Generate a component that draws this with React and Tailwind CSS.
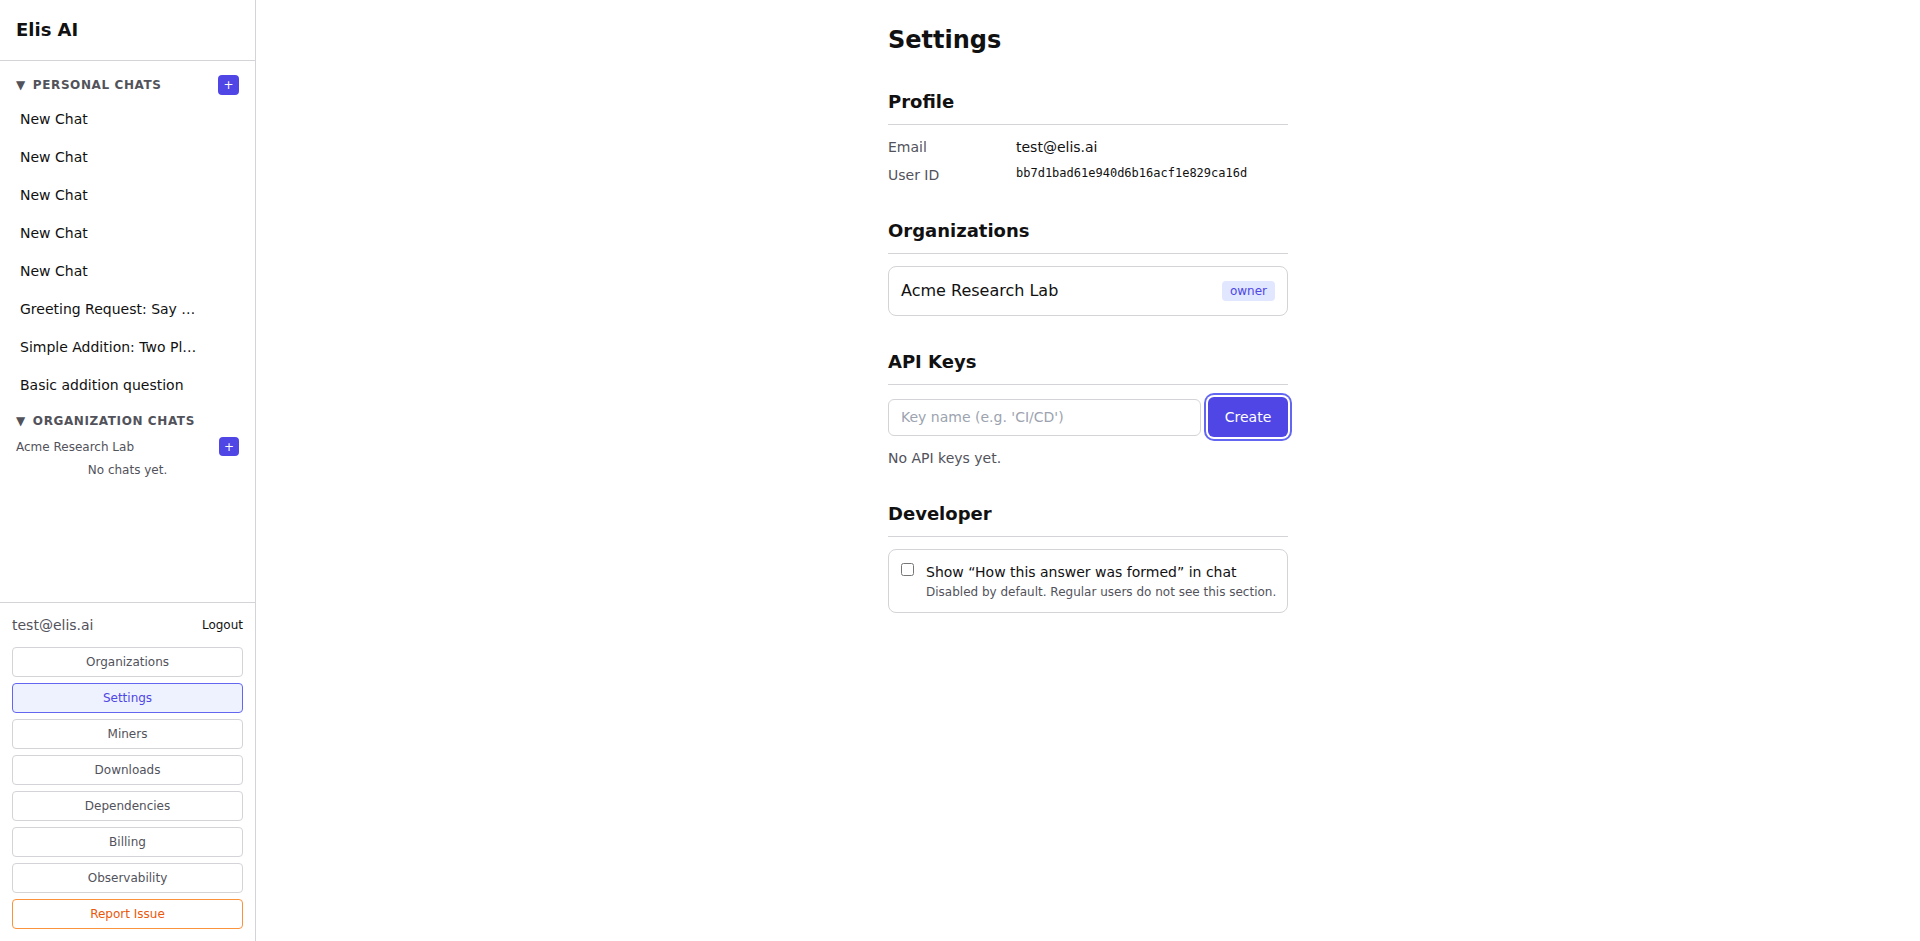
import { useState } from 'react';

const personalChats = [
  'New Chat',
  'New Chat',
  'New Chat',
  'New Chat',
  'New Chat',
  'Greeting Request: Say hello to the world',
  'Simple Addition: Two Plus Two',
  'Basic addition question',
];

const navItems = ['Organizations', 'Settings', 'Miners', 'Downloads', 'Dependencies', 'Billing', 'Observability'];

function PlusButton({ small }) {
  return (
    <button
      className={`flex items-center justify-center rounded bg-[#4f46e5] text-white text-xs leading-none ${small ? 'w-[20px] h-[19px]' : 'w-[21px] h-[20px]'}`}
    >
      +
    </button>
  );
}

function Sidebar() {
  return (
    <aside className="w-64 h-screen shrink-0 flex flex-col border-r border-[#d4d4d8] bg-white">
      {/* Brand */}
      <div className="h-[61px] px-4 flex items-center border-b border-[#d4d4d8]">
        <h1 className="text-lg font-bold text-[#111]">Elis AI</h1>
      </div>

      {/* Chats */}
      <div className="flex-1 overflow-y-auto px-4 pt-[14px]">
        <div className="flex items-center justify-between h-5">
          <div className="flex items-center gap-[7px] text-xs font-bold uppercase tracking-wider text-[#52525b]">
            <span className="text-xs">▼</span>
            <span>Personal Chats</span>
          </div>
          <PlusButton />
        </div>
        <ul className="mt-[5px]">
          {personalChats.map((c, i) => (
            <li key={i} className="h-[38px] flex items-center px-1 text-sm text-[#111]">
              <span className="truncate max-w-[178px]">{c}</span>
            </li>
          ))}
        </ul>
        <div className="mt-[9px] flex items-center gap-[7px] text-xs font-bold uppercase tracking-wider text-[#52525b] h-4">
          <span className="text-xs">▼</span>
          <span>Organization Chats</span>
        </div>
        <div className="mt-[8px] flex items-center justify-between">
          <span className="text-xs text-[#52525b]">Acme Research Lab</span>
          <PlusButton small />
        </div>
        <p className="mt-[6px] text-xs text-[#52525b] text-center">No chats yet.</p>
      </div>

      {/* Account */}
      <div className="border-t border-[#d4d4d8] p-3">
        <div className="flex items-center justify-between mb-3">
          <span className="text-sm text-[#52525b]">test@elis.ai</span>
          <button className="text-xs text-[#111]">Logout</button>
        </div>
        <div className="flex flex-col gap-1.5">
          {navItems.map((n) => (
            <button
              key={n}
              className={`w-full py-1.5 text-xs leading-4 rounded border ${
                n === 'Settings'
                  ? 'bg-[#eef2ff] border-[#6366f1] text-[#4f46e5]'
                  : 'bg-white border-[#d4d4d8] text-[#52525b]'
              }`}
            >
              {n}
            </button>
          ))}
          <button className="w-full py-1.5 text-xs leading-4 rounded border border-[#fb923c] text-[#ea580c] bg-white">
            Report Issue
          </button>
        </div>
      </div>
    </aside>
  );
}

function SectionTitle({ children }) {
  return <h2 className="text-lg font-bold text-[#111] pb-2 border-b border-[#d4d4d8]">{children}</h2>;
}

export default function App() {
  const [showFormed, setShowFormed] = useState(false);
  const [keyName, setKeyName] = useState('');

  return (
    <div className="flex h-screen bg-white font-['DejaVu_Sans',sans-serif] text-[#111]">
      <Sidebar />
      <main className="flex-1 overflow-y-auto">
        <div className="max-w-md mx-auto px-6 pt-6 pb-10">
          <h1 className="text-2xl font-bold leading-8 mb-8">Settings</h1>

          {/* Profile */}
          <section className="mb-8">
            <SectionTitle>Profile</SectionTitle>
            <div className="mt-3 flex flex-col gap-2 text-sm">
              <div className="flex items-center h-5">
                <span className="w-32 text-[#52525b]">Email</span>
                <span>test@elis.ai</span>
              </div>
              <div className="flex items-center h-5">
                <span className="w-32 text-[#52525b]">User ID</span>
                <span className="font-['DejaVu_Sans_Mono',monospace] text-xs -mt-1">bb7d1bad61e940d6b16acf1e829ca16d</span>
              </div>
            </div>
          </section>

          {/* Organizations */}
          <section className="mb-8">
            <SectionTitle>Organizations</SectionTitle>
            <div className="mt-3 border border-[#d4d4d8] rounded-lg px-3 py-3 flex items-center justify-between">
              <span className="text-base leading-6">Acme Research Lab</span>
              <span className="text-xs px-2 py-0.5 rounded bg-[#e0e7ff] text-[#4f46e5]">owner</span>
            </div>
          </section>

          {/* API Keys */}
          <section className="mb-8">
            <SectionTitle>API Keys</SectionTitle>
            <div className="mt-3 flex items-center gap-[7px]">
              <input
                value={keyName}
                onChange={(e) => setKeyName(e.target.value)}
                placeholder="Key name (e.g. 'CI/CD')"
                className="flex-1 min-w-0 h-[37px] px-3 text-sm border border-[#d4d4d8] rounded-md placeholder:text-[#9ca3af] outline-none"
              />
              <button className="h-10 w-20 rounded-md bg-[#4f46e5] text-white text-sm ring-2 ring-[#6366f1] ring-offset-2">
                Create
              </button>
            </div>
            <p className="mt-[11px] text-sm text-[#52525b]">No API keys yet.</p>
          </section>

          {/* Developer */}
          <section>
            <SectionTitle>Developer</SectionTitle>
            <label className="mt-3 border border-[#d4d4d8] rounded-lg p-3 flex items-start gap-3 cursor-pointer">
              <input
                type="checkbox"
                checked={showFormed}
                onChange={(e) => setShowFormed(e.target.checked)}
                className="mt-[1px] w-[13px] h-[13px] shrink-0"
              />
              <div className="min-w-0">
                <div className="text-sm leading-5 whitespace-nowrap">Show “How this answer was formed” in chat</div>
                <div className="mt-0.5 text-xs leading-4 text-[#52525b] whitespace-nowrap">Disabled by default. Regular users do not see this section.</div>
              </div>
            </label>
          </section>
        </div>
      </main>
    </div>
  );
}
